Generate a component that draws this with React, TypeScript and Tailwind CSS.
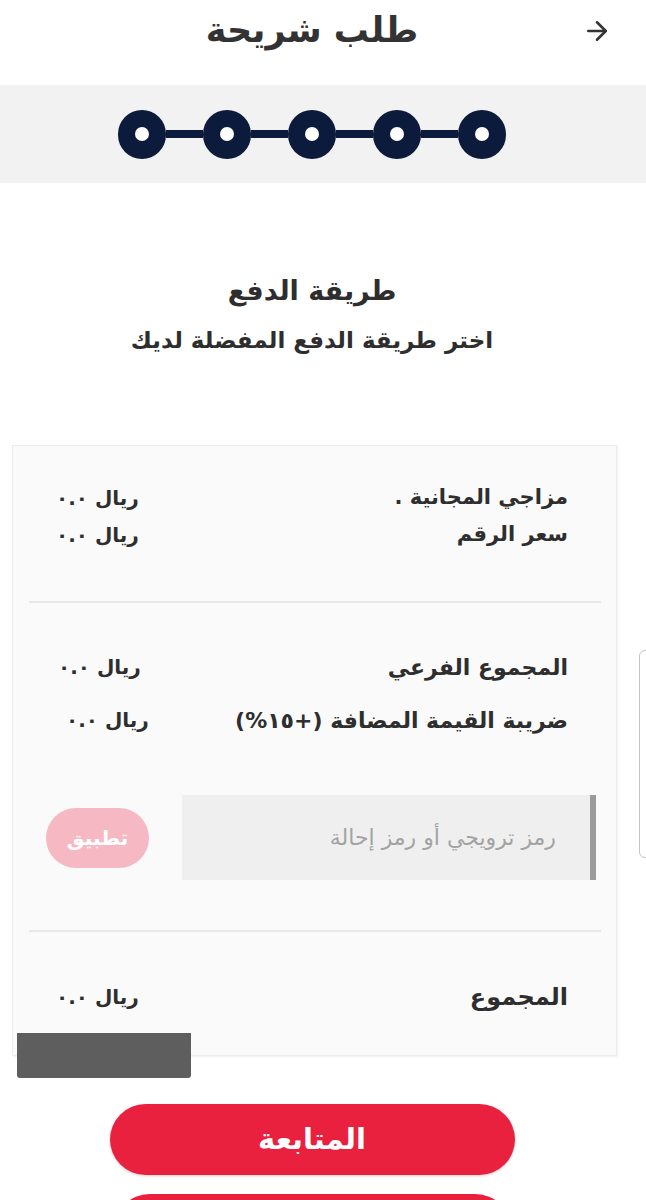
import type { ReactNode } from 'react';
import { ArrowRight } from 'lucide-react';

const STEPS = [1, 2, 3, 4, 5];

interface SummaryRowProps {
  label: ReactNode;
  value: string;
  height?: string;
  className?: string;
  valueClassName?: string;
}

function SummaryRow({ label, value, height = 'h-[40px]', className = '', valueClassName = '' }: SummaryRowProps) {
  return (
    <div className={`flex items-center justify-between pr-[48px] pl-[43px] ${height} ${className}`}>
      <span>{label}</span>
      <span className={`text-[20px] ${valueClassName}`}>{value}</span>
    </div>
  );
}

function Stepper() {
  return (
    <div className="flex items-center" dir="ltr">
      {STEPS.map((step, index) => (
        <div key={step} className="flex items-center">
          {index > 0 && <div className="h-[8px] w-[37px] bg-[#0c1a3c]" />}
          <div className="flex h-[49px] w-[48px] items-center justify-center rounded-full bg-[#0c1a3c]">
            <div className="h-[14px] w-[14px] rounded-full bg-white" />
          </div>
        </div>
      ))}
    </div>
  );
}

export default function App() {
  return (
    <div
      dir="rtl"
      className="relative h-[1200px] w-[646px] overflow-hidden bg-white text-[#2e2e2e]"
      style={{ fontFamily: '"DejaVu Sans", "Noto Sans", sans-serif' }}
    >
      {/* header */}
      <div className="flex h-[85px] items-center pb-[24px] pr-[34px] pl-[12px]">
        <ArrowRight className="h-[30px] w-[30px] text-[#333]" strokeWidth={2} />
        <h1 className="flex-1 text-center text-[35px] font-bold text-[#333]">طلب شريحة</h1>
        <div className="w-[30px]" />
      </div>

      {/* progress */}
      <div className="flex h-[98px] items-center justify-center bg-[#f2f2f2] pr-[22px]">
        <Stepper />
      </div>

      <div className="pr-[22px] text-center">
        <h2 className="mt-[93px] text-[27px] font-bold leading-[30px]">طريقة الدفع</h2>
        <p className="mt-[20px] text-[23px] font-bold leading-[28px]">اختر طريقة الدفع المفضلة لديك</p>
      </div>

      {/* summary card */}
      <div className="mt-[91px] mr-[29px] ml-[12px] border border-[#ececec] bg-[#fafafa] pt-[33px] pb-[38px] text-[21px] font-semibold shadow-[1px_1px_2px_rgba(0,0,0,0.06)]">
        <SummaryRow label="مزاجي المجانية ." value="ريال ٠.٠" height="h-[37px]" />
        <SummaryRow label="سعر الرقم" value="ريال ٠.٠" height="h-[37px]" />

        <div className="mt-[48px] ml-[16px] mr-[15px] h-[2px] bg-[#e8e8e8]" />

        <SummaryRow label="المجموع الفرعي" value="ريال ٠.٠" className="mt-[44px] text-[22px]" valueClassName="ml-[2px]" />
        <SummaryRow
          label={
            <>
              ضريبة القيمة المضافة <span dir="ltr" className="inline-block">(%١٥+)</span>
            </>
          }
          value="ريال ٠.٠"
          className="mt-[13px] text-[22px] font-bold"
          valueClassName="ml-[10px]"
        />

        <div className="mt-[55px] flex items-center pr-[20px] pl-[33px]">
          <div className="flex h-[85px] w-[414px] items-center border-r-[6px] border-[#9b9b9b] bg-[#efefef] pr-[34px]">
            <span className="text-[22px] font-normal text-[#a3a3a3]">رمز ترويجي أو رمز إحالة</span>
          </div>
          <div className="flex-1" />
          <button className="flex h-[60px] w-[103px] items-center justify-center rounded-full bg-[#f6b9c4] text-[20px] font-bold text-white">
            تطبيق
          </button>
        </div>

        <div className="mt-[50px] ml-[16px] mr-[15px] h-[2px] bg-[#e8e8e8]" />

        <SummaryRow label="المجموع" value="ريال ٠.٠" className="mt-[45px] text-[24px]" />
      </div>

      {/* actions */}
      <div className="flex flex-col items-center pr-[22px]">
        <button className="mt-[48px] flex h-[71px] w-[405px] items-center justify-center rounded-full bg-[#e9213f] text-[29px] font-bold text-white shadow-[0_1px_3px_rgba(0,0,0,0.2)]">
          المتابعة
        </button>
        <button className="mt-[19px] h-[71px] w-[397px] rounded-full bg-[#e9213f]" />
      </div>

      {/* redaction block over the card */}
      <div className="absolute left-[17px] top-[1033px] h-[45px] w-[174px] rounded-b-[3px] bg-[#5e5e5e]" />

      {/* edge artefact on the right */}
      <div className="absolute left-[639px] top-[650px] h-[208px] w-[24px] rounded-[6px] border border-[#c4c4c4]" />
    </div>
  );
}
